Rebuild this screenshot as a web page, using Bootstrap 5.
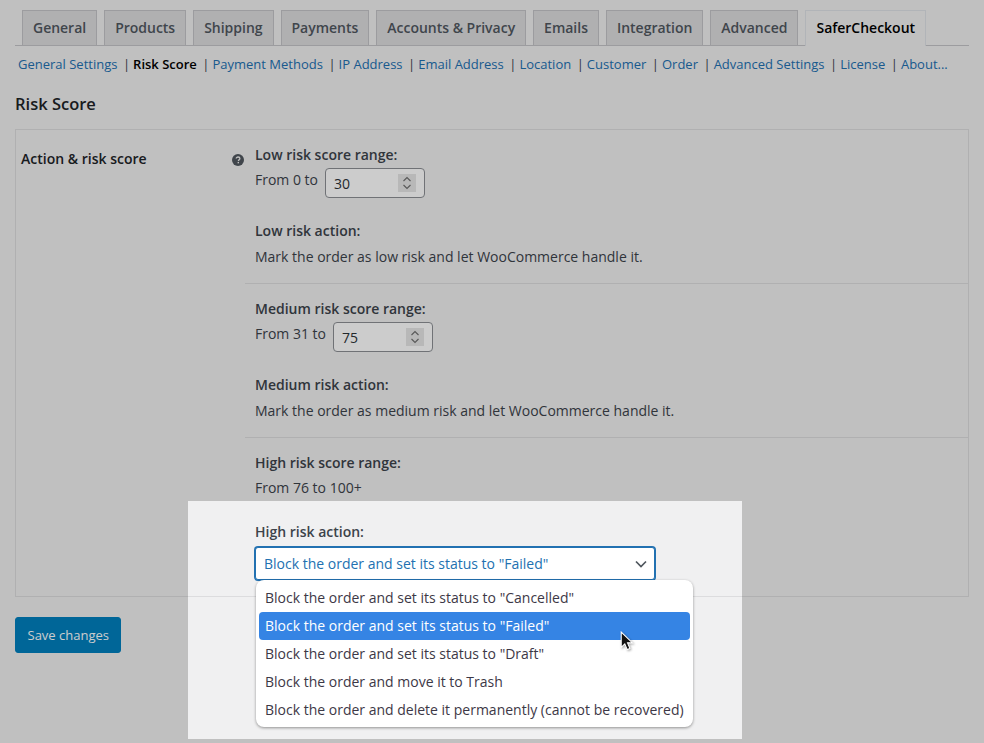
<!DOCTYPE html>
<html>
<head>
    <meta charset="UTF-8">
    <title>SaferCheckout - Risk Score</title>
    <link href="https://cdn.jsdelivr.net/npm/bootstrap@5.3.0/dist/css/bootstrap.min.css" rel="stylesheet">
    <style>
        html, body { height: 743px; overflow: hidden; }
        body { background-color: #f0f0f1; color: #3c434a; font-family: "Open Sans", sans-serif; font-size: 14px; line-height: 20px; }
        .page-wrap { padding: 10px 15px 0; position: relative; height: 743px; }

        /* abas */
        .wc-tabs { border-bottom: 1px solid #c3c4c7; padding-left: 7px; gap: 7px; flex-wrap: nowrap; }
        .wc-tabs .nav-link { background: #dcdcde; border: 1px solid #c3c4c7; border-bottom: 0; border-radius: 0; color: #50575e; font-weight: 600; font-size: 14px; letter-spacing: -.015px; line-height: 20px; padding: 7px 10px 7px; margin: 0; white-space: nowrap; }
        .wc-tabs .nav-link.active { background: #f0f0f1; color: #000; margin-bottom: -1px; padding-bottom: 8px; }

        /* sub menu */
        .sub-links { font-size: 13px; line-height: 20px; margin: 8px 0 0 3px; white-space: nowrap; }
        .sub-links a { color: #2271b1; text-decoration: none; }
        .sub-links a.current { color: #000; font-weight: 600; }
        .sub-links .sep { margin: 0 3px 0 5.500px; }

        .page-title { font-size: 16.500px; line-height: 20px; font-weight: 600; color: #1d2327; margin: 20px 0 15px; }

        /* caixa de opcoes */
        .opt-box { border: 1px solid #dcdcde; height: 468px; width: 954px; }
        .opt-label { width: 229px; padding: 19px 0 0 5px; font-weight: 600; color: #1d2327; position: relative; flex-shrink: 0; }
        .help-dot { position: absolute; left: 216px; top: 24px; }
        .opt-section { padding: 15px 10px 0; border-bottom: 1px solid #dcdcde; height: 154px; }
        .opt-section:last-child { border-bottom: 0; height: auto; }
        .opt-title { font-weight: 600; }
        .range-row { height: 33px; }
        .range-text { padding-top: 5px; }
        .num-holder { position: relative; margin: 3px 0 0 7px; width: 100px; height: 30px; }
        .risk-num.form-control { width: 100px; height: 30px; padding: 0 8px; font-size: 14px; color: #2c3338; background: #fff; border: 1px solid #8c8f94; border-radius: 4px; box-shadow: none; appearance: textfield; }
        .risk-num::-webkit-inner-spin-button { display: none; }
        .spin-box { position: absolute; right: 9px; top: 6px; }
        .gap-action { margin-top: 23px; }
        .gap-text { margin-top: 6px; }
        .gap-from { margin-top: 5px; }
        .gap-high { margin-top: 24px; }

        .risk-select.form-select { width: 400px; height: 33px; font-size: 14px; line-height: 20px; color: #2271b1; background-color: #fff; border: 1px solid #2271b1; box-shadow: 0 0 0 1px #2271b1; border-radius: 3px; padding: 0 30px 0 8px; margin: 5px 0 0 0; background-position: right 5px center; background-size: 16px 16px; font-family: "Open Sans", sans-serif; background-image: url("data:image/svg+xml,%3csvg xmlns='http://www.w3.org/2000/svg' viewBox='0 0 16 16'%3e%3cpath fill='none' stroke='%2350575e' stroke-width='1.700' d='M3 5.500l5 5 5-5'/%3e%3c/svg%3e"); }
        .select-holder { position: relative; }
        .risk-menu.dropdown-menu { position: absolute; left: 1px; top: 33px; width: 437px; height: 147px; padding: 4px 3px; border: 0; border-radius: 8px; box-shadow: 0 1px 3px rgba(0,0,0,.4); background: #fff; z-index: 5; font-size: 14px; }
        .risk-menu .dropdown-item { height: 28px; line-height: 28px; padding: 0 6px; color: #3d3846; border-radius: 4px; white-space: nowrap; }
        .risk-menu .dropdown-item.active { background: #3584e4; color: #fff; }
        .mouse-arrow { position: absolute; left: 364px; top: 51px; z-index: 6; filter: drop-shadow(1px 1px 1px rgba(0,0,0,.35)); }

        .save-btn.btn { background: #0080bf; border: 1px solid #0080bf; color: #fff; font-size: 13px; line-height: 26px; padding: 4px 11.500px; border-radius: 3px; margin-top: 20px; min-height: 36px; }

        /* destaque: tudo fora do recorte fica escurecido */
        .spotlight { position: absolute; left: 188px; top: 501px; width: 554px; height: 238px; box-shadow: 0 0 0 1200px rgba(0,0,0,.2); pointer-events: none; z-index: 3; }
    </style>
</head>
<body>
    <div class="page-wrap">
        <ul class="nav nav-tabs wc-tabs">
            <li class="nav-item"><a class="nav-link" href="#">General</a></li>
            <li class="nav-item"><a class="nav-link" href="#">Products</a></li>
            <li class="nav-item"><a class="nav-link" href="#">Shipping</a></li>
            <li class="nav-item"><a class="nav-link" href="#">Payments</a></li>
            <li class="nav-item"><a class="nav-link" href="#">Accounts &amp; Privacy</a></li>
            <li class="nav-item"><a class="nav-link" href="#">Emails</a></li>
            <li class="nav-item"><a class="nav-link" href="#">Integration</a></li>
            <li class="nav-item"><a class="nav-link" href="#">Advanced</a></li>
            <li class="nav-item"><a class="nav-link active" href="#">SaferCheckout</a></li>
        </ul>

        <div class="sub-links">
            <a href="#">General Settings</a><span class="sep">|</span><a class="current" href="#">Risk Score</a><span class="sep">|</span><a href="#">Payment Methods</a><span class="sep">|</span><a href="#">IP Address</a><span class="sep">|</span><a href="#">Email Address</a><span class="sep">|</span><a href="#">Location</a><span class="sep">|</span><a href="#">Customer</a><span class="sep">|</span><a href="#">Order</a><span class="sep">|</span><a href="#">Advanced Settings</a><span class="sep">|</span><a href="#">License</a><span class="sep">|</span><a href="#">About...</a>
        </div>

        <h2 class="page-title">Risk Score</h2>

        <div class="opt-box d-flex">
            <div class="opt-label">
                Action &amp; risk score
                <svg class="help-dot" width="12" height="12" viewBox="0 0 12 12"><circle cx="6" cy="6" r="6" fill="#50575e"/><path d="M4.200 4.600c0-1 .8-1.600 1.900-1.600s1.800.6 1.800 1.500c0 1.300-1.500 1.300-1.500 2.500" fill="none" stroke="#f0f0f1" stroke-width="1.300"/><rect x="5.600" y="7.900" width="1.400" height="1.400" fill="#f0f0f1"/></svg>
            </div>
            <div class="flex-grow-1">
                <div class="opt-section">
                    <div class="opt-title">Low risk score range:</div>
                    <div class="range-row d-flex">
                        <div class="range-text">From 0 to</div>
                        <div class="num-holder">
                            <input type="number" class="form-control risk-num" value="30">
                            <svg class="spin-box" width="18" height="18" viewBox="0 0 18 18"><rect width="18" height="18" fill="#e6e6e6"/><path d="M5.500 7l3.500-3.500 3.500 3.500M5.500 11l3.500 3.500 3.500-3.500" fill="none" stroke="#6e6e6e" stroke-width="1.100"/></svg>
                        </div>
                    </div>
                    <div class="opt-title gap-action">Low risk action:</div>
                    <div class="gap-text">Mark the order as low risk and let WooCommerce handle it.</div>
                </div>
                <div class="opt-section">
                    <div class="opt-title">Medium risk score range:</div>
                    <div class="range-row d-flex">
                        <div class="range-text">From 31 to</div>
                        <div class="num-holder">
                            <input type="number" class="form-control risk-num" value="75">
                            <svg class="spin-box" width="18" height="18" viewBox="0 0 18 18"><rect width="18" height="18" fill="#e6e6e6"/><path d="M5.500 7l3.500-3.500 3.500 3.500M5.500 11l3.500 3.500 3.500-3.500" fill="none" stroke="#6e6e6e" stroke-width="1.100"/></svg>
                        </div>
                    </div>
                    <div class="opt-title gap-action">Medium risk action:</div>
                    <div class="gap-text">Mark the order as medium risk and let WooCommerce handle it.</div>
                </div>
                <div class="opt-section">
                    <div class="opt-title">High risk score range:</div>
                    <div class="gap-from">From 76 to 100+</div>
                    <div class="opt-title gap-high">High risk action:</div>
                    <div class="select-holder">
                        <select class="form-select risk-select">
                            <option>Block the order and set its status to "Failed"</option>
                        </select>
                        <div class="dropdown-menu show risk-menu">
                            <a class="dropdown-item" href="#">Block the order and set its status to "Cancelled"</a>
                            <a class="dropdown-item active" href="#">Block the order and set its status to "Failed"</a>
                            <a class="dropdown-item" href="#">Block the order and set its status to "Draft"</a>
                            <a class="dropdown-item" href="#">Block the order and move it to Trash</a>
                            <a class="dropdown-item" href="#">Block the order and delete it permanently (cannot be recovered)</a>
                            <svg class="mouse-arrow" width="14" height="21" viewBox="0 0 13 20"><path d="M1 1v14.500l3.400-3.200 2.300 5.400 2.600-1.100-2.300-5.300h4.700z" fill="#111" stroke="#fff" stroke-width="1"/></svg>
                        </div>
                    </div>
                </div>
            </div>
        </div>

        <button type="button" class="btn save-btn">Save changes</button>

        <div class="spotlight"></div>
    </div>

    <script src="https://cdn.jsdelivr.net/npm/bootstrap@5.3.0/dist/js/bootstrap.bundle.min.js"></script>
</body>
</html>
